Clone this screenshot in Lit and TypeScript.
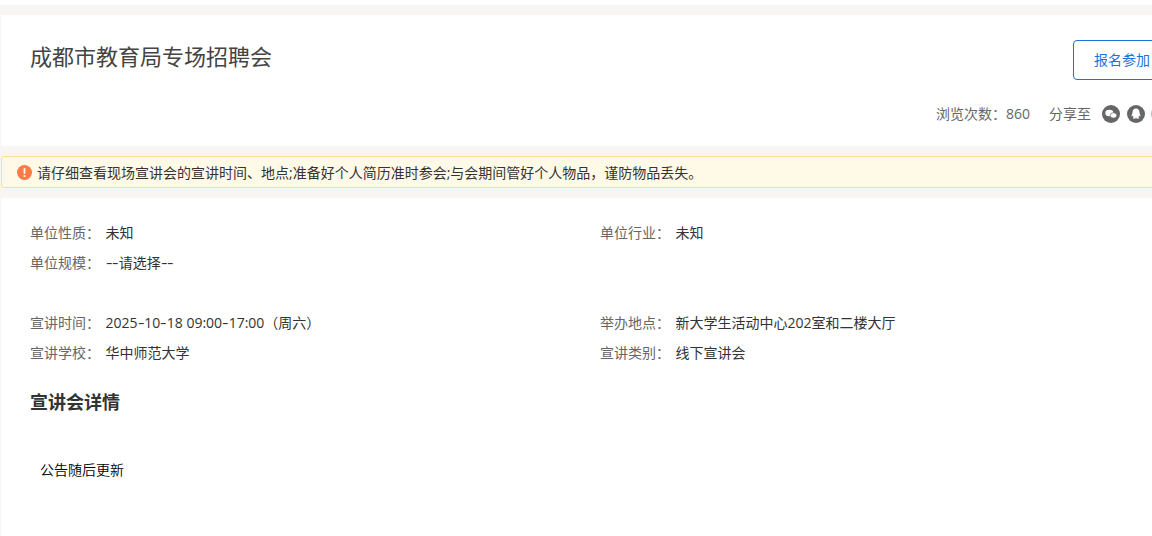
import { LitElement, html, css } from "lit";
import { customElement } from "lit/decorators.js";

@customElement("app-root")
export class AppRoot extends LitElement {
  static styles = css`
    :host { display: block; width: 1152px; height: 536px; overflow: hidden; background: #fff; }
  `;
  render() {
    return html`<job-page></job-page>`;
  }
}

@customElement("job-page")
export class JobPage extends LitElement {
  static styles = css`
    :host { display: block; width: 1200px; height: 536px; padding-top: 5px; box-sizing: border-box; font-family: "Open Sans", "Noto Sans CJK SC", "Noto Sans", sans-serif; }
    .wrap { background: #f7f6f4; padding: 10px 0 0 1px; height: 531px; box-sizing: border-box; display: flex; flex-direction: column; gap: 10px; }
    .head { background: #fff; height: 131px; box-sizing: border-box; padding: 25px 29px 0 29px; display: flex; flex-direction: column; }
    .top { display: flex; justify-content: space-between; align-items: flex-start; }
    h1 { margin: -2px 0 0; font-size: 22px; line-height: 36px; font-weight: 400; color: #444; }
    .btn { width: 98px; height: 40px; box-sizing: border-box; border: 1px solid #1a73d9; border-radius: 4px; color: #1a73d9; font-size: 14px; line-height: 38px; text-align: center; background: #fff; }
    .meta { display: flex; align-items: center; margin: 24px 0 0 906px; font-size: 14px; color: #666; line-height: 20px; white-space: nowrap; }
    .views { margin-right: 19px; }
    .share { margin-right: 11px; }
    .ic { width: 18px; height: 18px; margin-right: 7px; flex: none; display: block; }
    .ic.qq { margin-right: 6px; }
    .notice { height: 32px; box-sizing: border-box; background: #fffae8; border: 1px solid #fde08a; border-radius: 3px; display: flex; align-items: center; padding-left: 15px; font-size: 14px; color: #333; white-space: nowrap; }
    .notice svg { width: 15px; height: 15px; margin-right: 5px; flex: none; }
    .body { background: #fff; flex: 1; padding: 20px 29px 0; }
    .grid { display: grid; grid-template-columns: 570px 1fr; grid-auto-rows: 30px; font-size: 14px; line-height: 30px; }
    .gap { margin-top: 30px; }
    .item { display: flex; white-space: nowrap; }
    .k { color: #666; width: 75.5px; flex: none; }
    .v { color: #333; }
    .h { display: inline-block; width: 6.6px; text-align: center; transform: scaleX(1.45); }
    h2 { margin: 20px 0 0; font-size: 18px; line-height: 28px; font-weight: 700; color: #333; }
    .note { margin: 44px 0 0 10px; font-size: 14px; line-height: 20px; font-weight: 350; color: #000; }
  `;
  private val(text: string) {
    return text.split(/(-)/).map((part) => (part === "-" ? html`<span class="h">-</span>` : part));
  }
  render() {
    const row1 = [["单位性质\uff1a", "未知"], ["单位行业\uff1a", "未知"], ["单位规模\uff1a", "--请选择--"]];
    const row2 = [["宣讲时间\uff1a", "2025-10-18 09:00-17:00\uff08周六\uff09"], ["举办地点\uff1a", "新大学生活动中心202室和二楼大厅"], ["宣讲学校\uff1a", "华中师范大学"], ["宣讲类别\uff1a", "线下宣讲会"]];
    const item = (p: string[]) => html`<div class="item"><span class="k">${p[0]}</span><span class="v">${this.val(p[1])}</span></div>`;
    return html`<div class="wrap">
      <section class="head">
        <div class="top"><h1>成都市教育局专场招聘会</h1><div class="btn">报名参加</div></div>
        <div class="meta">
          <span class="views">浏览次数\uff1a860</span><span class="share">分享至</span>
          <svg class="ic" viewBox="0 0 18 18"><circle cx="9" cy="9" r="9" fill="#666"/><ellipse cx="7.3" cy="8" rx="4" ry="3.3" fill="#fff"/><ellipse cx="11.5" cy="10.4" rx="3.3" ry="2.7" fill="#fff" stroke="#666" stroke-width=".7"/></svg>
          <svg class="ic qq" viewBox="0 0 18 18"><circle cx="9" cy="9" r="9" fill="#666"/><path d="M9 3.6c-2.4 0-3.5 1.9-3.5 3.8 0 .8-1.1 2.5-1 3.6.1.9.8.2 1.2-.4.2.8.6 1.3 1 1.7-.6.2-1 .5-1 .9 0 .6 1.6.6 3.3.1 1.7.5 3.3.5 3.3-.1 0-.4-.4-.7-1-.9.4-.4.8-.9 1-1.7.4.6 1.1 1.3 1.2.4.1-1.1-1-2.8-1-3.6C12.5 5.5 11.4 3.6 9 3.6z" fill="#fff"/></svg>
          <svg class="ic" viewBox="0 0 18 18"><circle cx="9" cy="9" r="9" fill="#f2b35e"/></svg>
        </div>
      </section>
      <section class="notice">
        <svg viewBox="0 0 15 15"><circle cx="7.5" cy="7.5" r="7.5" fill="#ff7a45"/><rect x="6.6" y="3" width="1.8" height="6" rx=".9" fill="#fff"/><circle cx="7.5" cy="11" r="1.1" fill="#fff"/></svg>
        请仔细查看现场宣讲会的宣讲时间、地点;准备好个人简历准时参会;与会期间管好个人物品\uff0c谨防物品丢失。
      </section>
      <section class="body">
        <div class="grid">${row1.map(item)}</div>
        <div class="grid gap">${row2.map(item)}</div>
        <h2>宣讲会详情</h2>
        <div class="note">公告随后更新</div>
      </section>
    </div>`;
  }
}
